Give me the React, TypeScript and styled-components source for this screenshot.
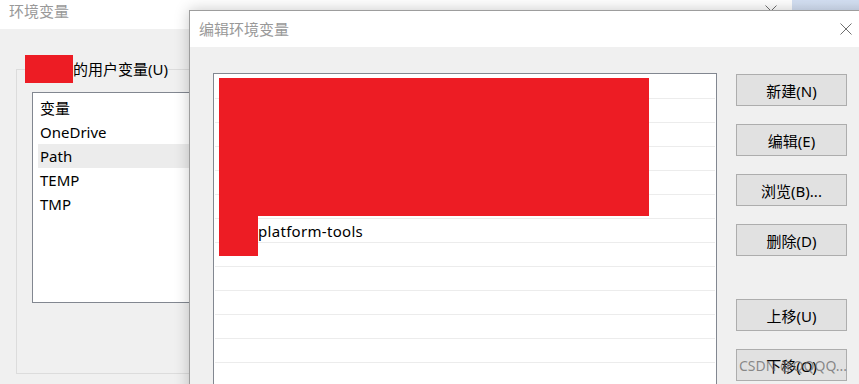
import styled, { createGlobalStyle } from 'styled-components';

const GlobalStyle = createGlobalStyle`
  html, body {
    margin: 0;
    padding: 0;
    overflow: hidden;
  }
  body {
    font-family: "Noto Sans", "Noto Sans CJK SC", sans-serif;
    font-size: 15px;
    color: #000;
  }
`;

const userVars = ['OneDrive', 'Path', 'TEMP', 'TMP'];
const pathRows = ['', '', '', '', '', '', 'platform-tools', '', '', '', '', '', ''];
const buttons = [
  { label: '新建(N)', gap: 0 },
  { label: '编辑(E)', gap: 18 },
  { label: '浏览(B)...', gap: 18 },
  { label: '删除(D)', gap: 18 },
  { label: '上移(U)', gap: 43 },
  { label: '下移(O)', gap: 18 },
];

const CloseIcon = () => (
  <svg width="12" height="12" viewBox="0 0 12 12">
    <path d="M0.5 0.5 L11.5 11.5 M11.5 0.5 L0.5 11.5" stroke="#6f6f6f" strokeWidth="1" fill="none" />
  </svg>
);

const App = () => {
  return (
    <Desktop>
      <GlobalStyle />
      <BackWindow>
        <TitleBar $height={37} $padLeft={9} $padRight={15}>
          <TitleText>环境变量</TitleText>
          <CloseIcon />
        </TitleBar>
        <BackBody>
          <GroupBox>
            <GroupLegend>
              <NameRedaction />
              的用户变量(U)
            </GroupLegend>
            <UserList>
              <UserRow>变量</UserRow>
              {userVars.map((name) => (
                <UserRow key={name} $selected={name === 'Path'}>
                  {name}
                </UserRow>
              ))}
            </UserList>
          </GroupBox>
        </BackBody>
      </BackWindow>

      <Dialog>
        <TitleBar $height={36} $padLeft={9} $padRight={28}>
          <TitleText>编辑环境变量</TitleText>
          <CloseIcon />
        </TitleBar>
        <DialogBody>
          <PathList>
            {pathRows.map((text, i) => (
              <PathRow key={i}>
                {text && <PathText $indent={39}>{text}</PathText>}
              </PathRow>
            ))}
            <Redaction style={{ left: 5, top: 4, width: 430, height: 138 }} />
            <Redaction style={{ left: 5, top: 142, width: 39, height: 40 }} />
          </PathList>
          <ButtonColumn>
            {buttons.map((b) => (
              <DialogButton key={b.label} $gap={b.gap}>
                {b.label}
              </DialogButton>
            ))}
            <Watermark>CSDN @QQQQ...</Watermark>
          </ButtonColumn>
        </DialogBody>
      </Dialog>
    </Desktop>
  );
};

const Desktop = styled.div`
  position: relative;
  width: 859px;
  height: 384px;
  overflow: hidden;
  background: linear-gradient(#d4e0f3, #bfcfec);
`;

const BackWindow = styled.div`
  position: absolute;
  left: 0;
  top: -8px;
  width: 792px;
  height: 400px;
  background: #f0f0f0;
  display: flex;
  flex-direction: column;
`;

const TitleBar = styled.div<{ $height: number; $padLeft: number; $padRight: number }>`
  height: ${({ $height }) => $height}px;
  flex-shrink: 0;
  display: flex;
  align-items: center;
  justify-content: space-between;
  padding: 0 ${({ $padRight }) => $padRight}px 0 ${({ $padLeft }) => $padLeft}px;
  background: #fff;

  svg {
    display: block;
  }
`;

const TitleText = styled.div`
  font-size: 15px;
  color: #999;
  line-height: 20px;
`;

const BackBody = styled.div`
  padding: 26px 0 0 16px;
`;

const GroupBox = styled.fieldset`
  margin: 0;
  width: 700px;
  border: 1px solid #dcdcdc;
  padding: 9px 0 70px 8px;
`;

const GroupLegend = styled.legend`
  padding: 0;
  display: flex;
  align-items: center;
  height: 28px;
  font-size: 15px;
  line-height: 20px;
`;

const NameRedaction = styled.span`
  display: inline-block;
  width: 48px;
  height: 28px;
  background: #ed1c24;
`;

const UserList = styled.div`
  margin-left: 7px;
  width: 560px;
  height: 206px;
  border: 1px solid #828790;
  background: #fff;
  padding: 3px 0 0 5px;
`;

const UserRow = styled.div<{ $selected?: boolean }>`
  height: 24px;
  line-height: 24px;
  padding-left: 2px;
  background: ${({ $selected }) => ($selected ? '#ececec' : 'transparent')};
`;

const Dialog = styled.div`
  position: absolute;
  left: 189px;
  top: 10px;
  width: 690px;
  height: 420px;
  border: 1px solid #9d9d9d;
  background: #f0f0f0;
  box-shadow: 0 0 14px rgba(0, 0, 0, 0.22);
  display: flex;
  flex-direction: column;
`;

const DialogBody = styled.div`
  display: flex;
  align-items: flex-start;
  gap: 19px;
  padding: 26px 0 0 23px;
`;

const PathList = styled.div`
  position: relative;
  width: 502px;
  height: 340px;
  padding-top: 1px;
  border: 1px solid #828790;
  background: #fff;
  overflow: hidden;
`;

const PathRow = styled.div`
  height: 23px;
  margin: 0 1px;
  border-bottom: 1px solid #ececec;
  padding-left: 4px;
  display: flex;
  align-items: center;
  font-size: 15px;
`;

const PathText = styled.span<{ $indent: number }>`
  padding-left: ${({ $indent }) => $indent}px;
  line-height: 20px;
  letter-spacing: 0.3px;
`;

const Redaction = styled.div`
  position: absolute;
  background: #ed1c24;
`;

const ButtonColumn = styled.div`
  position: relative;
  margin-top: 1px;
  display: flex;
  flex-direction: column;
`;

const DialogButton = styled.div<{ $gap: number }>`
  margin-top: ${({ $gap }) => $gap}px;
  width: 109px;
  height: 30px;
  border: 1px solid #adadad;
  background: #e1e1e1;
  display: flex;
  align-items: center;
  justify-content: center;
  font-size: 15px;
`;

const Watermark = styled.div`
  position: absolute;
  left: 3px;
  bottom: 0;
  width: 108px;
  font-size: 14px;
  line-height: 30px;
  white-space: nowrap;
  color: rgba(105, 105, 105, 0.75);
  pointer-events: none;
`;

export default App;
